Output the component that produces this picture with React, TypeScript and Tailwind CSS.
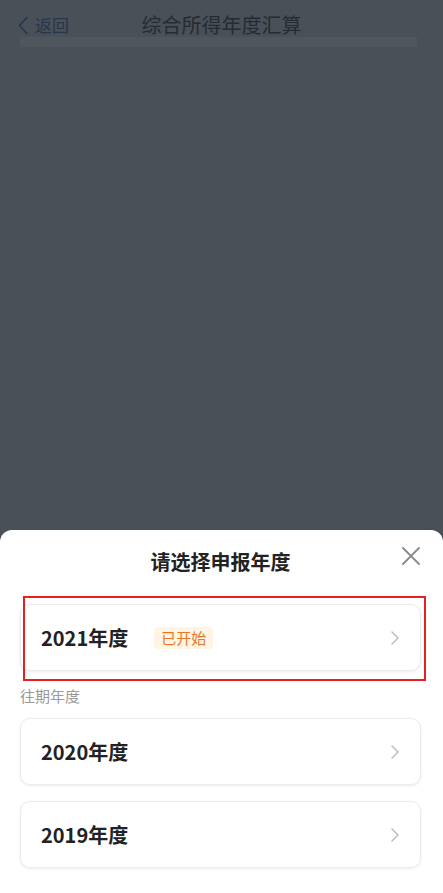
import React from 'react';

const font = { fontFamily: '"Noto Sans CJK SC", "Noto Sans", sans-serif' };

const Chevron = () => (
  <svg width="10" height="16" viewBox="0 0 10 16" fill="none">
    <path d="M2 2l6 6-6 6" stroke="#b9b9b9" strokeWidth="1.4" strokeLinecap="round" strokeLinejoin="round" />
  </svg>
);

const YearCard = ({ year, badge }: { year: string; badge?: string }) => (
  <div className="flex h-[67px] items-center rounded-[10px] border border-[#ececec] bg-white pl-5 pr-[20px] shadow-[0_1px_3px_rgba(0,0,0,0.08)]">
    <span className="text-[20px] font-bold leading-none text-[#222]">{year}</span>
    {badge && (
      <span className="ml-[26px] rounded-[4px] bg-[#fff5e2] px-[7px] py-[2px] text-[15px] leading-[18px] text-[#e8762c]">
        {badge}
      </span>
    )}
    <span className="ml-auto flex">
      <Chevron />
    </span>
  </div>
);

export default function App() {
  return (
    <div className="flex h-[893px] w-[443px] flex-col overflow-hidden bg-[#4a5058]" style={font}>
      {/* header under overlay */}
      <div className="relative h-[50px] shrink-0">
        <div className="flex items-center pl-[18px] pt-[14px]">
          <svg width="11" height="19" viewBox="0 0 11 19" fill="none">
            <path d="M9 1.5L1.5 9.5 9 17.5" stroke="#27354a" strokeWidth="1.6" strokeLinecap="round" strokeLinejoin="round" />
          </svg>
          <span className="ml-[6px] text-[17px] leading-[22px] text-[#27354a]">返回</span>
        </div>
        <div className="absolute left-0 right-0 top-[12px] text-center text-[20px] leading-[26px] text-[#262b31]">
          综合所得年度汇算
        </div>
        <div className="absolute left-[20px] right-[26px] top-[37px] h-[10px] bg-[#4f565e]" />
      </div>
      <div className="flex-1" />
      {/* bottom sheet */}
      <div className="relative h-[363px] shrink-0 rounded-t-[12px] bg-white pl-5 pr-[22px] pt-[19px]">
        <div className="text-center text-[20px] font-bold leading-[26px] text-[#222]">请选择申报年度</div>
        <svg className="absolute right-[22px] top-[16px]" width="20" height="20" viewBox="0 0 20 20" fill="none">
          <path d="M2 2l16 16M18 2L2 18" stroke="#8a8a8a" strokeWidth="1.8" strokeLinecap="round" />
        </svg>
        <div className="relative mt-[29px]">
          <YearCard year="2021年度" badge="已开始" />
          <div className="pointer-events-none absolute -bottom-[10px] -right-[5px] -top-[8px] left-[3px] border-2 border-[#e3211f]" />
        </div>
        <div className="mt-[15px] text-[15px] leading-[20px] text-[#999]">往期年度</div>
        <div className="mt-[12px] flex flex-col gap-4">
          <YearCard year="2020年度" />
          <YearCard year="2019年度" />
        </div>
      </div>
    </div>
  );
}
